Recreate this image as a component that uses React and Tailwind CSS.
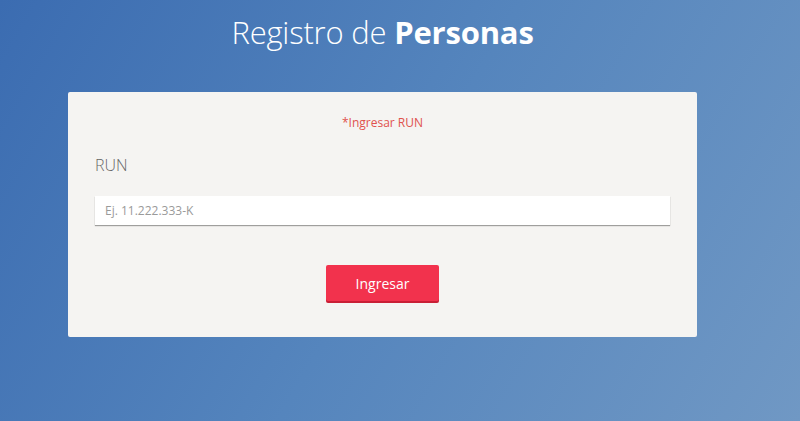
import React from "react";

export default function App() {
  return (
    <div className="min-h-screen h-[421px] w-full overflow-hidden bg-[linear-gradient(120deg,#3b6cb1_0%,#5585bd_50%,#7098c4_100%)] font-['Open_Sans',sans-serif]">
      <div className="w-[765px] flex flex-col items-center">
        <h1 className="mt-[11px] text-[31px] leading-[42px] text-white font-light tracking-[-0.2px]">
          Registro de <span className="font-bold">Personas</span>
        </h1>

        {/* Card */}
        <div className="mt-[39px] w-[629px] h-[245px] bg-[#f5f4f2] rounded-[2px] px-[27px] pt-[22px]">
          <p className="text-center text-[12px] leading-[17px] text-[#e0524e]">*Ingresar RUN</p>

          <label className="block mt-[23px] text-[16px] leading-[22px] font-light text-[#666666]">RUN</label>

          <input
            type="text"
            placeholder="Ej. 11.222.333-K"
            className="mt-[20px] block w-full h-[29px] bg-white px-[10px] text-[12px] text-[#444] placeholder:text-[#9a9a9a] outline-none shadow-[0_1px_1px_rgba(0,0,0,0.35)]"
          />

          <div className="mt-[40px] flex justify-center">
            <button className="w-[113px] h-[36px] bg-[#f2324d] text-white text-[14px] rounded-[2px] shadow-[0_2px_0_#c91f36]">
              Ingresar
            </button>
          </div>
        </div>
      </div>
    </div>
  );
}
